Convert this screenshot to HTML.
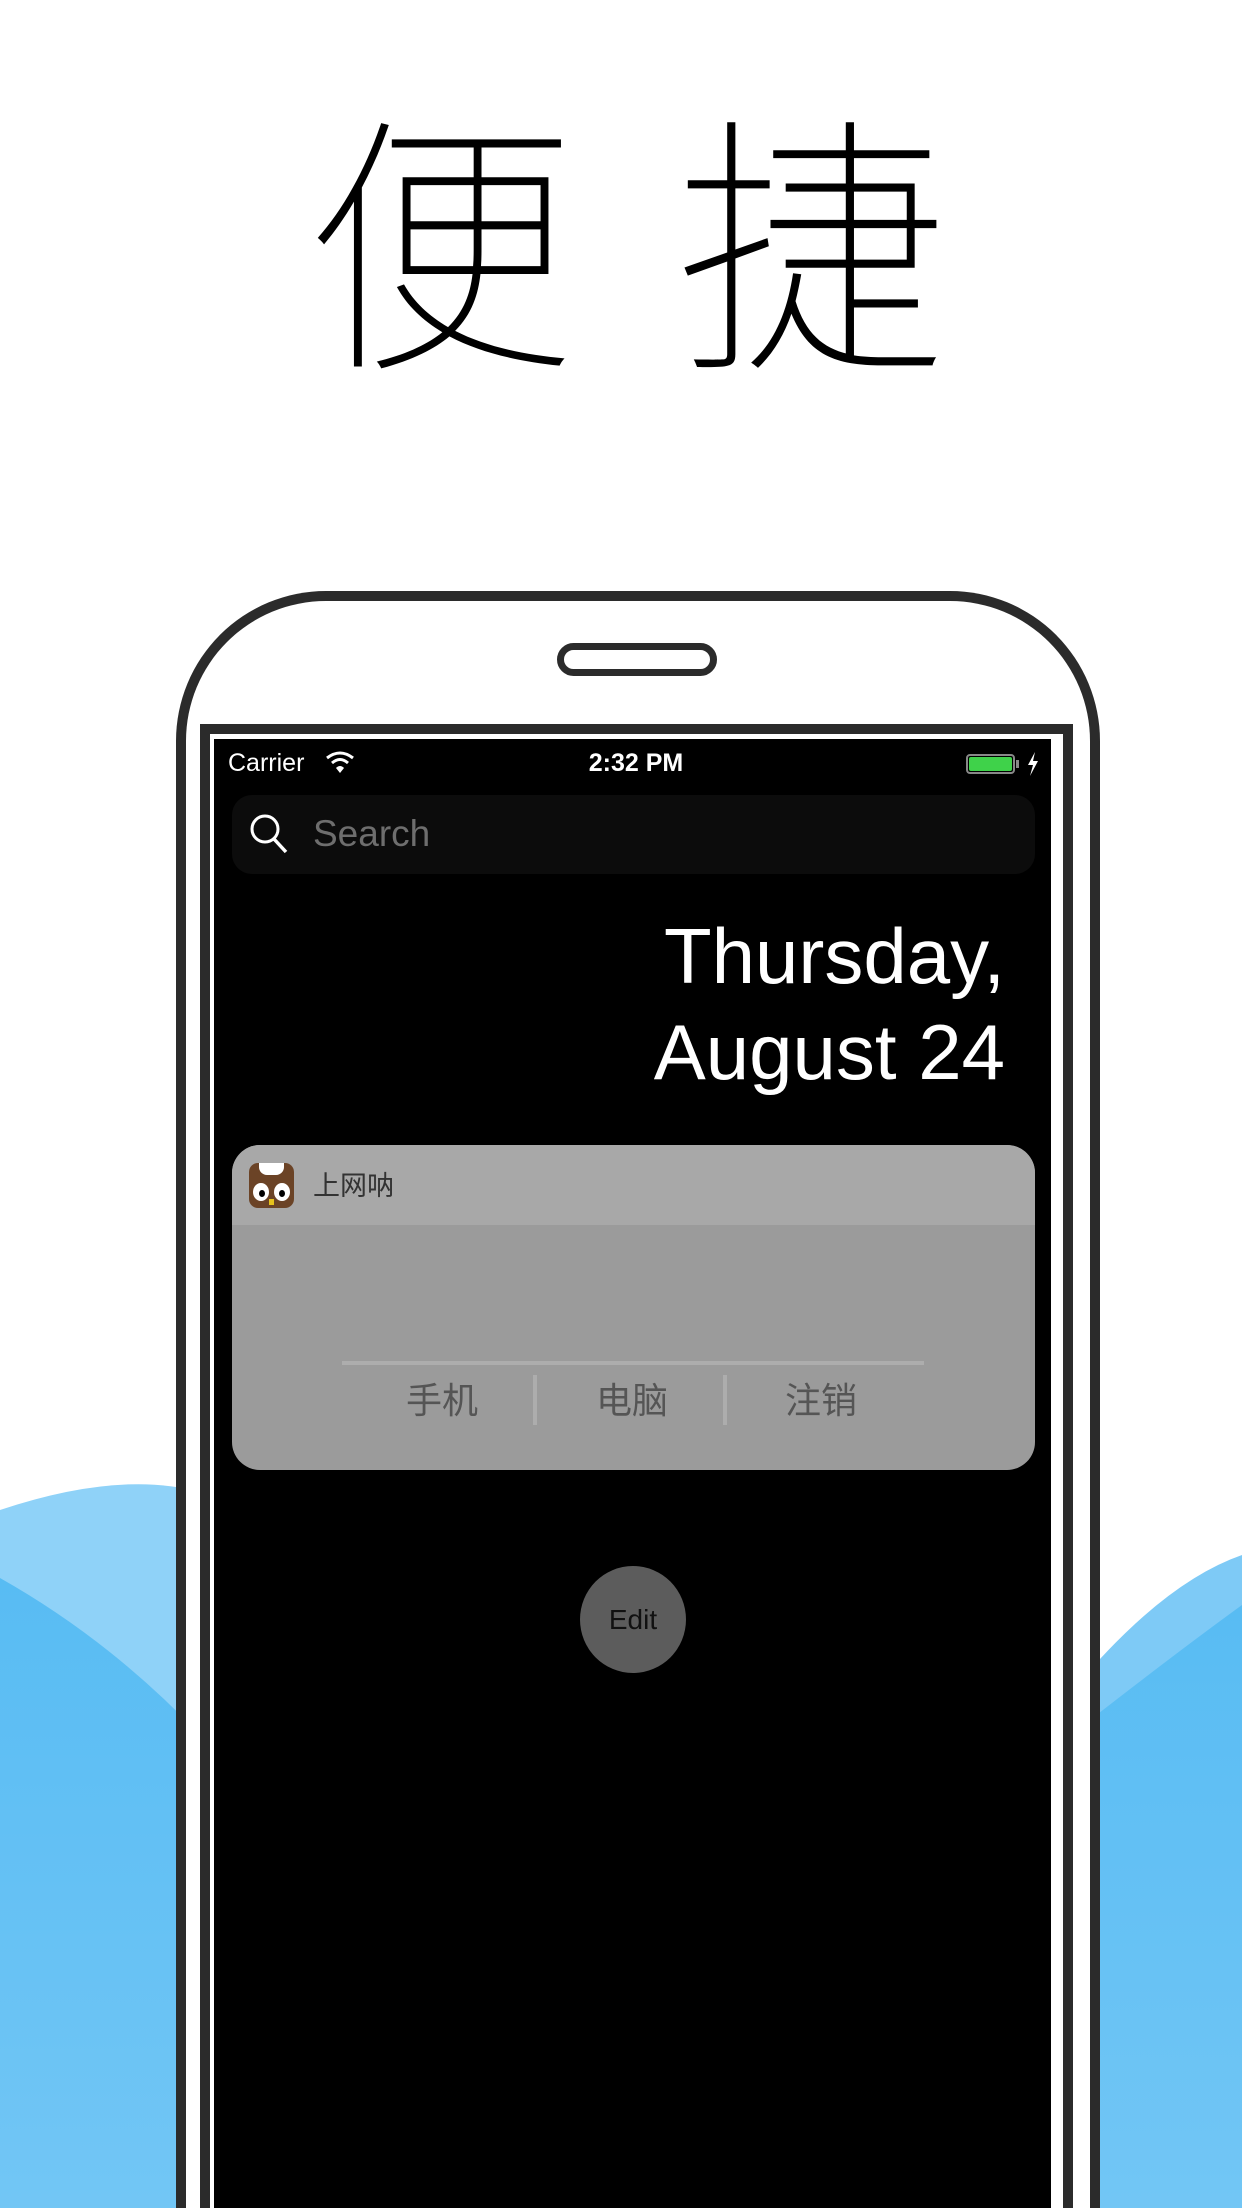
<!DOCTYPE html>
<html style="width:1242px;height:2208px;overflow:hidden"><head><meta charset="utf-8"><style>
*{margin:0;padding:0;box-sizing:border-box}
body{width:1242px;height:2208px;background:#fff;position:relative;overflow:hidden;font-family:"Liberation Sans","Noto Sans CJK SC",sans-serif}
.abs{position:absolute}
.t{position:absolute;top:80px;font-family:"Noto Sans CJK SC",sans-serif;font-weight:100;font-size:272px;line-height:300px;color:#000}
</style></head><body>
<svg class="abs" style="left:0;top:0" width="1242" height="2208">
<defs><linearGradient id="g" x1="0" y1="0" x2="0" y2="1"><stop offset="0" stop-color="#58bcf3"/><stop offset="1" stop-color="#72c6f5"/></linearGradient></defs>
<path d="M0 1510 Q120 1470 200 1492 L200 2208 L0 2208Z" fill="#8fd2f8"/>
<path d="M0 1578 Q110 1640 200 1735 L200 2208 L0 2208Z" fill="url(#g)"/>
<path d="M1090 1670 Q1170 1580 1242 1555 L1242 2208 L1090 2208Z" fill="#7ecaf6"/>
<path d="M1090 1720 Q1180 1650 1242 1605 L1242 2208 L1090 2208Z" fill="url(#g)"/>
</svg>
<div class="t" style="left:305px">便</div>
<div class="t" style="left:675px">捷</div>
<!-- phone -->
<div class="abs" style="left:176px;top:591px;width:924px;height:1617px;border:10px solid #2b2b2b;border-bottom:none;border-radius:150px 150px 0 0;background:#fff"></div>
<div class="abs" style="left:557px;top:643px;width:160px;height:33px;border:7px solid #2b2b2b;border-radius:17px;background:#fff"></div>
<div class="abs" style="left:200px;top:724px;width:873px;height:1484px;border:10px solid #2b2b2b;border-bottom:none;background:#fff"></div>
<div class="abs" style="left:214px;top:739px;width:837px;height:1469px;background:#000"></div>
<!-- status -->
<div class="abs" style="left:228px;top:748px;color:#fff;font-size:25px;line-height:30px">Carrier</div>
<svg class="abs" style="left:325px;top:750px" width="30" height="24" viewBox="0 0 30 24"><path d="M2 8 Q15 -2 28 8" stroke="#fff" stroke-width="3" fill="none"/><path d="M7 13 Q15 6 23 13" stroke="#fff" stroke-width="3" fill="none"/><path d="M11 18 L15 23 L19 18 Q15 14 11 18Z" fill="#fff"/></svg>
<div class="abs" style="left:536px;top:748px;width:200px;text-align:center;color:#fff;font-size:25px;line-height:30px;font-weight:bold">2:32 PM</div>
<div class="abs" style="left:966px;top:754px;width:49px;height:20px;border:2px solid #888;border-radius:4px;padding:1px"><div style="width:100%;height:100%;background:#3fd24a;border-radius:2px"></div></div>
<div class="abs" style="left:1016px;top:760px;width:3px;height:8px;background:#888"></div>
<svg class="abs" style="left:1026px;top:752px" width="14" height="24"><path d="M9 0 L2 13 L7 13 L4 24 L12 9 L7 9Z" fill="#fff"/></svg>
<!-- search -->
<div class="abs" style="left:232px;top:795px;width:803px;height:79px;background:#0c0c0c;border-radius:20px"></div>
<svg class="abs" style="left:248px;top:812px" width="44" height="44"><circle cx="17" cy="17" r="13" stroke="#fff" stroke-width="3" fill="none"/><line x1="26" y1="27" x2="38" y2="40" stroke="#fff" stroke-width="3.5"/></svg>
<div class="abs" style="left:313px;top:812px;color:#6e6e6e;font-size:37px;line-height:44px">Search</div>
<!-- date -->
<div class="abs" style="left:400px;top:908px;width:605px;text-align:right;color:#fff;font-size:78px;line-height:96px">Thursday,<br>August 24</div>
<!-- widget -->
<div class="abs" style="left:232px;top:1145px;width:803px;height:325px;background:#9b9b9b;border-radius:28px;overflow:hidden">
<div style="height:80px;background:#a8a8a8"></div>
</div>
<div class="abs" style="left:249px;top:1163px;width:45px;height:45px;background:#6b4326;border-radius:9px;overflow:hidden">
<div class="abs" style="left:10px;top:0;width:25px;height:12px;background:#fff;border-radius:0 0 8px 8px"></div>
<div class="abs" style="left:4px;top:20px;width:16px;height:18px;background:#fff;border-radius:50%"></div>
<div class="abs" style="left:25px;top:20px;width:16px;height:18px;background:#fff;border-radius:50%"></div>
<div class="abs" style="left:10px;top:27px;width:6px;height:7px;background:#000;border-radius:50%"></div>
<div class="abs" style="left:30px;top:27px;width:6px;height:7px;background:#000;border-radius:50%"></div>
<div class="abs" style="left:20px;top:36px;width:5px;height:6px;background:#e7c21d"></div>
</div>
<div class="abs" style="left:313px;top:1168px;color:#333;font-size:27px;line-height:36px">上网呐</div>
<div class="abs" style="left:342px;top:1361px;width:582px;height:4px;background:#adadad"></div>
<div class="abs" style="left:533px;top:1375px;width:4px;height:50px;background:#adadad"></div>
<div class="abs" style="left:723px;top:1375px;width:4px;height:50px;background:#adadad"></div>
<div class="abs" style="left:342px;top:1378px;width:200px;text-align:center;color:#555;font-size:36px;line-height:46px">手机</div>
<div class="abs" style="left:532px;top:1378px;width:200px;text-align:center;color:#555;font-size:36px;line-height:46px">电脑</div>
<div class="abs" style="left:721px;top:1378px;width:200px;text-align:center;color:#555;font-size:36px;line-height:46px">注销</div>
<!-- edit -->
<div class="abs" style="left:580px;top:1566px;width:106px;height:107px;border-radius:50%;background:#5c5c5c;color:#111;font-size:28px;line-height:107px;text-align:center">Edit</div>
</body></html>
